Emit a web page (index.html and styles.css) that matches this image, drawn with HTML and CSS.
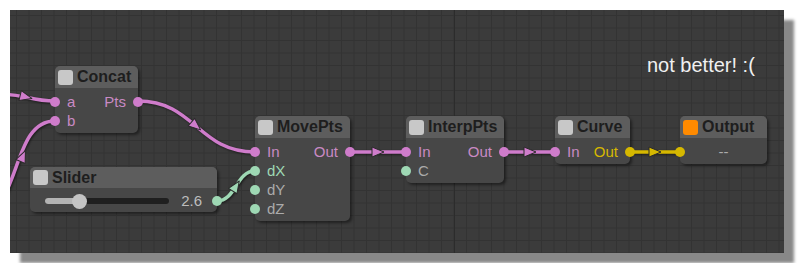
FILE: index.html
```html
<!DOCTYPE html>
<html lang="en">
<head>
    <meta charset="UTF-8">
    <title>Node Graph</title>
    <link rel="stylesheet" href="styles.css">
</head>
<body>
    <div class="canvas">
        <svg class="wires" width="774" height="243" viewBox="0 0 774 243">
            <g class="wire pink">
                <path d="M-10,84 C15,84 20,91 45,91"/>
                <path d="M-8,190 C10,160 12,111 45,111"/>
                <path d="M128,91 C185,91 188,142 245,142"/>
                <path d="M340,142 L396,142"/>
                <path d="M494,142 L545,142"/>
            </g>
            <g class="wire green">
                <path d="M207,191 C226,191 226,161 245,161"/>
            </g>
            <g class="wire yellow">
                <path d="M620,142 L670,142"/>
            </g>
            <g class="arrow pink">
                <polygon points="-6,-5 6,0 -6,5" transform="translate(16,87) rotate(14)"/>
                <polygon points="-6,-5 6,0 -6,5" transform="translate(13,146) rotate(-66)"/>
                <polygon points="-6,-5 6,0 -6,5" transform="translate(186,116) rotate(40)"/>
                <polygon points="-6,-5 6,0 -6,5" transform="translate(368,142)"/>
                <polygon points="-6,-5 6,0 -6,5" transform="translate(520,142)"/>
            </g>
            <g class="arrow green">
                <polygon points="-6,-5 6,0 -6,5" transform="translate(226,176) rotate(-57)"/>
            </g>
            <g class="arrow yellow">
                <polygon points="-6,-5 6,0 -6,5" transform="translate(645,142)"/>
            </g>
        </svg>

        <div class="note">not better! :(</div>

        <div class="node" style="left: 45px; top: 56px; width: 83px;">
            <div class="node-head"><span class="check"></span>Concat</div>
            <div class="node-body">
                <div class="row">
                    <span class="port in pink"></span><span class="label pink">a</span>
                    <span class="label out pink">Pts</span><span class="port out pink"></span>
                </div>
                <div class="row">
                    <span class="port in pink"></span><span class="label pink">b</span>
                </div>
            </div>
        </div>

        <div class="node" style="left: 20px; top: 157px; width: 187px;">
            <div class="node-head slim"><span class="check"></span>Slider</div>
            <div class="node-body">
                <div class="row slider-row">
                    <div class="track">
                        <div class="track-fill"></div>
                        <div class="knob"></div>
                    </div>
                    <span class="value">2.6</span>
                    <span class="port out green"></span>
                </div>
            </div>
        </div>

        <div class="node" style="left: 245px; top: 106px; width: 95px;">
            <div class="node-head"><span class="check"></span>MovePts</div>
            <div class="node-body">
                <div class="row">
                    <span class="port in pink"></span><span class="label pink">In</span>
                    <span class="label out pink">Out</span><span class="port out pink"></span>
                </div>
                <div class="row">
                    <span class="port in green"></span><span class="label green">dX</span>
                </div>
                <div class="row">
                    <span class="port in green"></span><span class="label">dY</span>
                </div>
                <div class="row">
                    <span class="port in green"></span><span class="label">dZ</span>
                </div>
            </div>
        </div>

        <div class="node" style="left: 396px; top: 106px; width: 98px;">
            <div class="node-head"><span class="check"></span>InterpPts</div>
            <div class="node-body">
                <div class="row">
                    <span class="port in pink"></span><span class="label pink">In</span>
                    <span class="label out pink">Out</span><span class="port out pink"></span>
                </div>
                <div class="row">
                    <span class="port in green"></span><span class="label">C</span>
                </div>
            </div>
        </div>

        <div class="node" style="left: 545px; top: 106px; width: 75px;">
            <div class="node-head"><span class="check"></span>Curve</div>
            <div class="node-body">
                <div class="row">
                    <span class="port in pink"></span><span class="label pink">In</span>
                    <span class="label out yellow">Out</span><span class="port out yellow"></span>
                </div>
            </div>
        </div>

        <div class="node" style="left: 670px; top: 106px; width: 87px;">
            <div class="node-head"><span class="check orange"></span>Output</div>
            <div class="node-body">
                <div class="row center">
                    <span class="port in yellow"></span><span class="label">--</span>
                </div>
            </div>
        </div>
    </div>
</body>
</html>
```

FILE: styles.css
```css
:root {
    --canvas: #3b3b3b;
    --grid: #333333;
    --head: #5d5d5d;
    --body: #474747;
    --title: #1e1e1e;
    --pink: #cf7ccb;
    --pink-text: #c98ac4;
    --green: #9ed8b4;
    --yellow: #d6b800;
    --muted: #ababab;
}

* {
    margin: 0;
    padding: 0;
    box-sizing: border-box;
}

body {
    background: #ffffff;
    font-family: "Liberation Sans", Arial, sans-serif;
    padding: 10px;
}

.canvas {
    position: relative;
    width: 774px;
    height: 243px;
    background-color: var(--canvas);
    background-image:
        linear-gradient(to right, transparent 444px, #2c2c2c 444px, #2c2c2c 445px, transparent 445px),
        linear-gradient(to right, var(--grid) 1px, transparent 1px),
        linear-gradient(to bottom, var(--grid) 1px, transparent 1px);
    background-size: 100% 100%, 12.5px 12.5px, 12.5px 12.5px;
    background-repeat: no-repeat, repeat, repeat;
    background-position: 0 0, 6px 5px, 6px 5px;
    box-shadow: 10px 10px 3px #888888;
}

.wires {
    position: absolute;
    left: 0;
    top: 0;
    overflow: hidden;
}

.wire {
    filter: drop-shadow(1px 1px 1px rgba(0, 0, 0, 0.55));
}

.wire path {
    fill: none;
    stroke-width: 3.5;
    stroke-linecap: round;
}

.wire.pink path { stroke: var(--pink); }
.wire.green path { stroke: var(--green); }
.wire.yellow path { stroke: var(--yellow); }

.arrow polygon {
    stroke: #2a2a2a;
    stroke-width: 1;
    stroke-linejoin: round;
}

.arrow.pink polygon { fill: var(--pink); }
.arrow.green polygon { fill: var(--green); }
.arrow.yellow polygon { fill: var(--yellow); }

.note {
    position: absolute;
    left: 637px;
    top: 44px;
    font-size: 20px;
    color: #f0f0f0;
}

.node {
    position: absolute;
    background: var(--body);
    border-radius: 5px;
    box-shadow: 2px 2px 3px rgba(0, 0, 0, 0.45);
}

.node-head {
    height: 22px;
    display: flex;
    align-items: center;
    gap: 4px;
    padding-left: 3px;
    background: var(--head);
    border-radius: 5px 5px 0 0;
    color: var(--title);
    font-size: 16px;
    font-weight: 700;
}

.node-head.slim {
    height: 21px;
}

.check {
    width: 15px;
    height: 15px;
    border-radius: 3px;
    background: #c8c8c8;
}

.check.orange {
    background: #ff8a00;
}

.node-body {
    padding: 4px 0 3px;
}

.row {
    position: relative;
    height: 19px;
    display: flex;
    align-items: center;
    padding: 0 12px;
    font-size: 15px;
}

.row.center {
    justify-content: center;
}

.label {
    color: var(--muted);
}

.label.out {
    margin-left: auto;
}

.label.pink { color: var(--pink-text); }
.label.green { color: var(--green); }
.label.yellow { color: var(--yellow); }

.port {
    position: absolute;
    top: 5px;
    width: 10px;
    height: 10px;
    border-radius: 50%;
}

.port.in { left: -5px; }
.port.out { right: -5px; }
.port.pink { background: var(--pink); }
.port.green { background: var(--green); }
.port.yellow { background: var(--yellow); }

.slider-row {
    height: 17px;
    padding: 0 15px;
    gap: 12px;
}

.track {
    position: relative;
    width: 125px;
    height: 6px;
    border-radius: 3px;
    background: #1f1f1f;
}

.track-fill {
    width: 34px;
    height: 6px;
    border-radius: 3px;
    background: #b4b4b4;
}

.knob {
    position: absolute;
    left: 27px;
    top: -4px;
    width: 15px;
    height: 15px;
    border-radius: 50%;
    background: #c4c4c4;
}

.value {
    color: #bdbdbd;
    font-size: 15px;
}

.slider-row .port {
    top: 4px;
}
```
